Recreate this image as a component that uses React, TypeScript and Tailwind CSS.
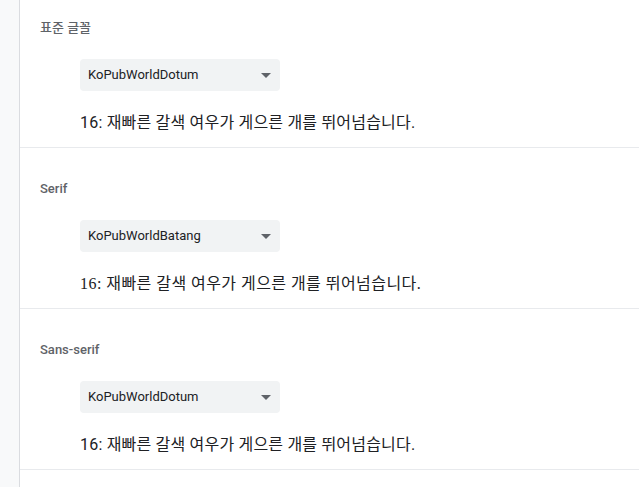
import React from "react";

const sans = "font-['Roboto','Noto_Sans_CJK_KR',sans-serif]";

function Section({
  label,
  value,
  serif,
  first,
}: {
  label: string;
  value: string;
  serif?: boolean;
  first?: boolean;
}) {
  return (
    <div className={`border-b border-[#e8eaed] pb-[14px] ${first ? "pt-[20px]" : "pt-[33px]"}`}>
      <div className={`pl-[20px] text-[13px] leading-[16px] font-medium text-[#5f6368] ${sans}`}>{label}</div>
      <div className="pl-[60px] pt-[23px]">
        <div className="flex h-[32px] w-[200px] items-center justify-between rounded-[4px] bg-[#f1f3f4] pl-[8px] pr-[8px]">
          <span className={`text-[13px] text-[#202124] ${sans}`}>{value}</span>
          <svg width="10" height="5" viewBox="0 0 10 5" className="mr-[1px]">
            <path d="M0 0 L10 0 L5 5 Z" fill="#5f6368" />
          </svg>
        </div>
        <div
          className={`mt-[22px] h-[20px] whitespace-nowrap text-[16px] leading-[20px] text-[#202124] ${
            serif
              ? "font-['Liberation_Serif','Noto_Sans_CJK_KR',serif] tracking-[0.45px]"
              : `${sans} tracking-[0.2px]`
          }`}
        >
          16: 재빠른 갈색 여우가 게으른 개를 뛰어넘습니다.
        </div>
      </div>
    </div>
  );
}

export default function App() {
  return (
    <div className="flex h-[487px] w-[639px] overflow-hidden bg-white">
      <div className="w-[20px] shrink-0 border-r border-[#dadce0] bg-[#f8f9fa]" />
      <div className="flex-1">
        <Section label="표준 글꼴" value="KoPubWorldDotum" first />
        <Section label="Serif" value="KoPubWorldBatang" serif />
        <Section label="Sans-serif" value="KoPubWorldDotum" />
      </div>
    </div>
  );
}
